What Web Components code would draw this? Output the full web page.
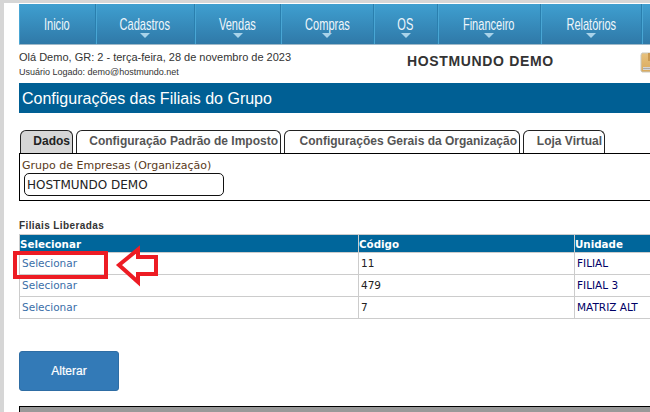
<!DOCTYPE html>
<html lang="pt"><head><meta charset="utf-8"><title>Configurações</title>
<style>
html,body{margin:0;padding:0;height:412px;width:650px;overflow:hidden;background:#fff}
</style></head><body>
<app-page></app-page>
<template id="t-page"><style>
:host{display:block;position:relative;width:650px;height:412px;overflow:hidden;box-sizing:border-box;border-top:3px solid #d6d6d6;border-left:4px solid #d6d6d6;background:#fff;font-family:"Liberation Sans",Arial,sans-serif}
main{display:flex;flex-direction:column;padding:1px 0 0 15px;width:800px;box-sizing:border-box}
.hd{display:grid;grid-template-columns:388px 233px auto;height:38px;padding-top:1px;box-sizing:border-box}
.l1{font-size:11px;line-height:16px;color:#333;margin-top:3px}
.l2{font-size:9px;line-height:13px;color:#333;margin-top:1px}
.org{font:bold 14px/16px "Liberation Sans",sans-serif;color:#333;margin-top:7px;letter-spacing:.65px}
.ico{margin-top:6px}
.bar{background:#005f94;color:#fff;font-size:16px;line-height:31px;height:30px;padding-left:3px}
.tb{margin-top:17px}
.lbl{font:bold 10px/12px "Liberation Sans",sans-serif;color:#333;margin-top:19px;letter-spacing:.4px}
.btn{margin-top:32px}
.foot{margin-top:15px;height:10px;background:#999;border:1px solid #000;box-sizing:border-box}
.red{position:absolute;left:9px;top:248px;width:95px;height:28px;box-sizing:border-box;border:4px solid #ed1c24}
svg.arrow{position:absolute;left:110px;top:242px}
</style>
<main>
<top-nav></top-nav>
<section class="hd">
<div><div class="l1">Olá Demo, GR: 2 - terça-feira, 28 de novembro de 2023</div><div class="l2">Usuário Logado: demo@hostmundo.net</div></div>
<div class="org">HOSTMUNDO DEMO</div>
<svg class="ico" width="20" height="21" viewBox="0 0 20 21"><defs><linearGradient id="g" x1="0" y1="0" x2="0" y2="1"><stop offset="0" stop-color="#e8c27e"/><stop offset="1" stop-color="#d9a95c"/></linearGradient></defs><path d="M2 1h16l1 2v16l-1 1H2l-1-1V3z" fill="url(#g)" stroke="#c9c9c0"/><path d="M8 1h5v8H8z" fill="#c99850"/><path d="M3 15h13v3H3z" fill="#fff"/><path d="M4 15.500v2M6 15.500v2M8 15.500v2M10 15.500v2M12 15.500v2M14 15.500v2" stroke="#555"/></svg>
</section>
<div class="bar">Configurações das Filiais do Grupo</div>
<tab-panel class="tb"></tab-panel>
<div class="lbl">Filiais Liberadas</div>
<branch-table></branch-table>
<action-button class="btn">Alterar</action-button>
<div class="foot"></div>
</main>
<div class="red"></div>
<svg class="arrow" width="46" height="44" viewBox="0 0 46 44"><path d="M5 20 L24 4.500 V12 H42 V29 H24 V37 Z" fill="#fff" stroke="#ed1c24" stroke-width="4"/></svg>
</template>
<template id="t-nav"><style>
:host{display:flex;height:41px;width:635px;box-sizing:border-box;border-bottom:1px solid #9fb9c9;background:linear-gradient(#3f9fd0,#2f79a8);overflow:hidden}
a{display:block;position:relative;box-sizing:border-box;border-right:1px solid #2a7fae;box-shadow:inset 1px 0 0 #49a6d4;color:#eef6fb;font:17px/42px "Liberation Sans",sans-serif;text-align:center;height:40px}
a span{display:inline-block;transform:scaleX(.65);white-space:nowrap}
a.d::after{content:"";position:absolute;left:50%;margin-left:-5px;top:29px;border:5px solid transparent;border-top:5px solid #a9d3ea;border-bottom:0}
</style>
<a style="width:77px"><span>Inicio</span></a><a class="d" style="width:99px"><span>Cadastros</span></a><a class="d" style="width:86px"><span>Vendas</span></a><a class="d" style="width:93px"><span>Compras</span></a><a class="d" style="width:64px"><span>OS</span></a><a class="d" style="width:103px"><span>Financeiro</span></a><a class="d" style="width:101px"><span>Relatórios</span></a><a style="width:12px"></a>
</template>
<template id="t-tabs"><style>
:host{display:block;width:800px;font-family:"Liberation Sans",sans-serif}
.tabs{display:flex;gap:3px;height:23px;padding-left:1px;position:relative}
.t{box-sizing:border-box;height:23px;border:1px solid #222;border-bottom:0;border-radius:6px 6px 0 0;font:bold 12px/21px "Liberation Sans",sans-serif;color:#555;text-align:right;padding-right:2px}
.t.on{background:#d6d6d6;color:#222}
.p{box-sizing:border-box;border:1px solid #000;border-right:0;height:48px;padding-left:2px}
.c{font:11px/15px "DejaVu Sans",sans-serif;color:#5a3a1a;margin-top:4px;height:14px}
.i{box-sizing:border-box;margin:1px 0 0 2px;width:200px;height:23px;border:1px solid #111;border-radius:5px;font:12px/23px "DejaVu Sans",sans-serif;color:#222;padding-left:2px}
</style>
<div class="tabs"><div class="t on" style="width:53px">Dados</div><div class="t" style="width:205px">Configuração Padrão de Imposto</div><div class="t" style="width:236px">Configurações Gerais da Organização</div><div class="t" style="width:82px">Loja Virtual</div></div>
<div class="p"><div class="c">Grupo de Empresas (Organização)</div><div class="i">HOSTMUNDO DEMO</div></div>
</template>
<template id="t-table"><style>
:host{display:block;margin-top:2px;width:800px}
table{border-collapse:collapse;table-layout:fixed;width:800px;font:10.500px "DejaVu Sans",sans-serif}
th{background:#00669b;color:#fff;font:bold 10.300px/16px "DejaVu Sans",sans-serif;text-align:left;padding:0;height:17px;border:1px solid #ccc}
td{border:1px solid #ccc;height:19px;padding:0 0 2px 2px;color:#000066}
td.a{color:#3a6ea8}td.n{color:#222}
</style>
<table><colgroup><col style="width:339px"><col style="width:216px"><col></colgroup>
<tr><th>Selecionar</th><th>Código</th><th>Unidade</th></tr>
<tr><td class="a">Selecionar</td><td class="n">11</td><td>FILIAL</td></tr>
<tr><td class="a">Selecionar</td><td class="n">479</td><td>FILIAL 3</td></tr>
<tr><td class="a">Selecionar</td><td class="n">7</td><td>MATRIZ ALT</td></tr>
</table>
</template>
<template id="t-btn"><style>
:host{display:flex;align-items:center;justify-content:center;box-sizing:border-box;width:100px;height:40px;background:#337ab7;border:1px solid #2e6da4;border-radius:3px;color:#fff;font:12px "Liberation Sans",sans-serif;-webkit-text-stroke:.2px #fff}
</style><slot></slot></template>
<script>
function def(name,id){customElements.define(name,class extends HTMLElement{constructor(){super();this.attachShadow({mode:"open"}).appendChild(document.getElementById(id).content.cloneNode(true));}});}
def("top-nav","t-nav");def("tab-panel","t-tabs");def("branch-table","t-table");def("action-button","t-btn");def("app-page","t-page");
</script>
</body></html>
